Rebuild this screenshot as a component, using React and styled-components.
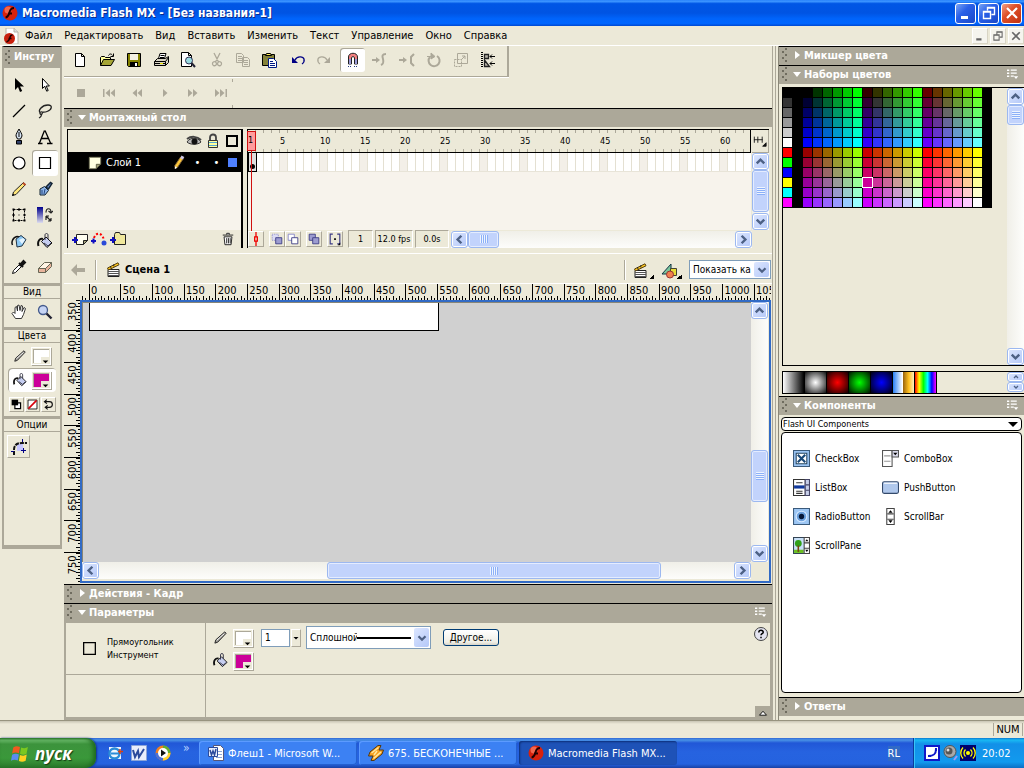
import React from 'react';
import styled, { createGlobalStyle } from 'styled-components';

const GlobalStyle = createGlobalStyle`
  * { box-sizing: border-box; }
  body {
    margin: 0;
    background: #ECE9D8;
    color: #000;
    font-family: "DejaVu Sans Condensed", "DejaVu Sans", sans-serif;
    font-size: 11px;
    line-height: 13px;
  }
  button, input, select {
    font: inherit;
    color: inherit;
    margin: 0;
    padding: 0;
    border: 0;
    background: none;
    border-radius: 0;
    outline: none;
  }
  select { appearance: none; }
  svg { display: block; flex: none; }
`;

/* ---------- icons ---------- */

const G = '#ACA899';

const icons = {
  flash: <><circle cx="8" cy="8" r="7.5" fill="#d8220d" /><circle cx="6" cy="5" r="3.5" fill="#f2664c" /><path d="M12 3C8 3 8 6 7.4 8S6 12 3.6 12.6M6 8.4h4" fill="none" stroke="#200" strokeWidth="2" /></>,
  flashDoc: <><path d="M3 0h8l4 4v12H3z" fill="#fff" stroke="#b8b4a8" /><path d="M11 0v4h4" fill="#ddd" stroke="#b8b4a8" /><circle cx="6.5" cy="10.5" r="5.5" fill="#c8200d" /><path d="M9.500 7C7 7 7 9 6.600 10.500S5.500 13.500 3.500 14M5.500 10.600h3" fill="none" stroke="#200" strokeWidth="1.500" /></>,
  newDoc: <path d="M3.500 1.500h6l3 3v10h-9zM9.500 1.500v3h3" fill="#fff" stroke="#000" />,
  open: <><path d="M1.500 13.500v-8l1-1h3l1 1h5v2" fill="#ffff9c" stroke="#000" /><path d="M1.500 13.500l3-6h11l-3.500 6z" fill="#a5a536" stroke="#000" /><path d="M9.500 3.500c1-2 3-2 4 0M14.500 1.500v3h-3" fill="none" stroke="#000" /></>,
  save: <><path d="M1.500 1.500h13v13h-12l-1-1z" fill="#848200" stroke="#000" /><path d="M4 2h8v6H4z" fill="#f4f1e4" /><path d="M4 10h8v4H4z" fill="#000" /><path d="M9 11h2v3H9z" fill="#fff" /></>,
  print: <><path d="M5.500 6.500l1.500-5h6l-1.500 5" fill="#fff" stroke="#000" /><path d="M7.500 3.500h4M7 5.500h4" stroke="#000" /><path d="M1.500 9.500l3-3h8l3-2v6l-3 3h-11z" fill="#d8d4c4" stroke="#000" /><path d="M1.500 9.500h11v4M12.500 9.500l3-4M2 11.500h10" fill="none" stroke="#000" /><path d="M7 11h3v1H7z" fill="#e8e000" /></>,
  preview: <><path d="M1.500.5h7l3 3v11h-10zM8.500.5v3h3" fill="#fff" stroke="#000" /><circle cx="9" cy="8.500" r="3.500" fill="#9adbe0" stroke="#335" /><path d="M11.500 11l3.500 4" stroke="#223" strokeWidth="2" /></>,
  cut: <path d="M5 1l4.500 9M11 1L6.500 10M6.500 10a2 2 0 1 1-3 2 2 2 0 0 1 3-2M9.500 10a2 2 0 1 0 3 2 2 2 0 0 0-3-2" fill="none" stroke={G} strokeWidth="1.300" />,
  copy: <path d="M1.500 1.500h5l2 2v7h-7zM3 4.500h4M3 6.500h4M3 8.500h4M7.500 5.500h5l2 2v7h-7zM9 8.500h4M9 10.500h4M9 12.500h4" fill="#ECE9D8" stroke={G} />,
  paste: <><path d="M1.500 2.500h12v11h-12z" fill="#84823a" stroke="#000" /><path d="M4.500 3.500l1-2h4l1 2z" fill="#ffef5a" stroke="#000" /><path d="M7.500 6.500h5l3 3v6h-8z" fill="#fff" stroke="#001a84" /><path d="M9 9.500h3M9 11.500h5M9 13.500h5" stroke="#001a84" /></>,
  undo: <><path d="M2 5v6h6z" fill="#000084" /><path d="M5 8c2-4 8-4 9-1 .5 2-.5 4-2 5" fill="none" stroke="#000084" strokeWidth="1.300" /></>,
  redo: <><path d="M14 5v6H8z" fill={G} /><path d="M11 8C9 4 3 4 2 7c-.5 2 .5 4 2 5" fill="none" stroke={G} strokeWidth="1.300" /></>,
  magnet: <><path d="M3.500 12V5c0-5 9-5 9 0v7h-3V5.500c0-1-3-1-3 0V12z" fill="#f08080" stroke="#222" /><path d="M4 7h2v5H4zM10 7h2v5h-2z" fill="#9a9ad8" /><path d="M3 14.500h4M9 14.500h4" stroke="#223a84" strokeDasharray="1 1" /></>,
  smooth: <><path d="M0 8h6" stroke={G} strokeWidth="2" /><path d="M4 5l4 3-4 3z" fill={G} /><path d="M14 2c-4 0-4 2-3 5 1 4 0 5-2 6" fill="none" stroke={G} strokeWidth="2" /></>,
  straight: <><path d="M0 8h6" stroke={G} strokeWidth="2" /><path d="M4 5l4 3-4 3z" fill={G} /><path d="M15 2l-3 3v6l3 3" fill="none" stroke={G} strokeWidth="2" /></>,
  rotate: <><path d="M4 5a5.500 5.500 0 1 0 7-1" fill="none" stroke={G} strokeWidth="2" /><path d="M1 4.500h5M5 1v6l4-2.500z" fill={G} stroke={G} /></>,
  scale: <><path d="M4.500 1.500h10v10h-10z" fill="none" stroke={G} /><path d="M1.500 7.500h7v7h-7z" fill="none" stroke={G} strokeDasharray="2 1" /><path d="M8 8l4-4M9 4h3v3" fill="none" stroke={G} /></>,
  align: <><path d="M2 0v16" stroke="#000" strokeWidth="2" strokeDasharray="1 1" /><path d="M4.500 2.500h4v4h-4zM4.500 8v6.500h5z" fill="#b8b4a8" stroke="#222" strokeWidth="1.300" /><path d="M10 4.500h5M12 2.500l-2 2 2 2M10 11.500h5M12 9.500l-2 2 2 2" fill="none" stroke="#000" /></>,
  stop: <path d="M4 4h8v8H4z" fill={G} />,
  first: <path d="M2 4h1.500v8H2zM9 4v8L4.500 8zM14 4v8L9.500 8z" fill={G} />,
  back: <path d="M8 4v8L3.500 8zM13 4v8L8.500 8z" fill={G} />,
  play: <path d="M6 4v8l4.500-4z" fill={G} />,
  fwd: <path d="M3 4v8l4.500-4zM8 4v8l4.500-4z" fill={G} />,
  last: <path d="M2 4v8l4.500-4zM7 4v8l4.500-4zM12.500 4H14v8h-1.500z" fill={G} />,
  arrow: <path d="M4 1v12l3-3 2 5 2.200-1L9 9.500h4z" fill="#000" />,
  subselect: <path d="M5.500 1.500v10l2.200-2.300 2 5 1.500-.7-2-4.500h3.200z" fill="#fff" stroke="#000" />,
  line: <path d="M2 14L14 2" stroke="#000" strokeWidth="1.300" />,
  lasso: <path d="M3.500 10C0 8 5 2 11 2c5 0 4 5-1 6.500-2 .7-5 1-5 .5s-2.500 0-2 1.500 3 .5 2-.5M4 11c1 1 0 3-2 4" fill="none" stroke="#222" strokeWidth="1.300" />,
  pen: <><path d="M8 0c-1.500 3-3 4.500-3 7l1.500 3h3L11 7c0-2.500-1.500-4-3-7z" fill="#d6e4f4" stroke="#000" /><path d="M8 3v5" stroke="#000" /><path d="M5.500 11.500h5V15h-5z" fill="#31416b" stroke="#000" /></>,
  letter: <path d="M7.500 1.500L2.500 14M8 1.500L13.500 14M4.500 9.500h7M1 14.500h4.500M10 14.500h5.500" fill="none" stroke="#000" strokeWidth="1.300" />,
  oval: <circle cx="8" cy="8" r="6" fill="#fff" stroke="#000" strokeWidth="1.200" />,
  rect: <path d="M2.500 2.500h11v11h-11z" fill="none" stroke="#000" strokeWidth="1.200" />,
  pencil: <><path d="M1.500 14.500l1-3.500L12.500 1.500l2 2L5 13.500z" fill="#ffe77b" stroke="#222" /><path d="M12 2l2.500 2" stroke="#c5502a" strokeWidth="2" /><path d="M1 15l1-2.500L3.500 14z" /></>,
  layerPencil: <><path d="M4.500 14.500l-.5-3L10 2.500l3 1.500-6 9z" fill="#ffc83a" stroke="#8a6a3a" /><path d="M10.500 2l3 1.500" stroke="#d0c8e8" strokeWidth="3" /><path d="M4 15l.5-3 2 1.500z" fill="#fff" /></>,
  brush: <><path d="M9 6l4.500-4.500 1.500 1L11.500 8z" fill="#6b8cc6" stroke="#123" strokeWidth="1.500" /><path d="M3 8l4.500-2.500 4 4L8 14H3z" fill="#8cb4e8" stroke="#123" /><path d="M5 13V9M7 13l1-5" stroke="#25457f" /></>,
  transform: <><path d="M2.500 2.500h11v11h-11z" fill="none" stroke="#000" strokeDasharray="2 1" /><path d="M1.500 1.500h2v2h-2zM12.500 1.500h2v2h-2zM1.500 12.500h2v2h-2zM12.500 12.500h2v2h-2zM7 1.500h2v2H7zM7 12.500h2v2H7zM1.500 7h2v2h-2zM12.500 7h2v2h-2zM7.500 7.500h1v1h-1z" /></>,
  fillTransform: <><path d="M0 0h6v16H0z" fill="url(#fadeBlue)" /><path d="M9 5.500c0-5 5-5 5 0M11.500 4l2.500 2 2-2M9 9v4M9 9l5 5M9 9h3M14 14v-3M14 14h-3" fill="none" stroke="#222" strokeWidth="1.200" /></>,
  ink: <><path d="M1.500 12C0 9 2 4 6 3.500c2 0 4 .5 5 1.500" fill="none" stroke="#111" strokeWidth="1.500" /><path d="M5 6l5-3.500 5 4L11 13l-5 1z" fill="#8cc8f4" stroke="#234" /><path d="M8 7l4-2 2 2-3 4z" fill="#e4f4ff" /></>,
  bucket: <><path d="M1.500 13C0 8 3 5 6 6" fill="none" stroke="#111" strokeWidth="2" /><path d="M4.500 8.500L9 4l6 6-5 4.500z" fill="#c6cef0" stroke="#111" /><path d="M8 7V2c0-2 3-2 3 0v4M7 10l4 3 3-3" fill="none" stroke="#334" /></>,
  dropper: <><path d="M1.500 14.500l1-3 6-6 2 2-6 6z" fill="#fff" stroke="#111" /><path d="M8 4l4 4M9 6l3.500-4 1.500 1.500L10.500 7z" stroke="#111" strokeWidth="2" /></>,
  eraser: <><path d="M1.500 9.500l6-6h7l-6 6z" fill="#fff4e4" stroke="#665" /><path d="M1.500 9.500h7v4h-7zM8.500 9.500l6-6v4l-6 6z" fill="#e8b49c" stroke="#665" /></>,
  hand: <path d="M4.500 14.500L1 9.500 2.500 8 4 9.500V3.500l1.500-1L6.500 7V1.500L8 1l1 5.500 1-5 1.500.5-.5 5.500 2-4 1.500 1-2 6-2 4z" fill="#fff" stroke="#222" strokeWidth=".9" />,
  zoom: <><circle cx="6" cy="6" r="4.500" fill="#c6d4f4" stroke="#445a8c" strokeWidth="1.300" /><path d="M9.500 9.500l5 5" stroke="#223" strokeWidth="2.400" /></>,
  grayPencil: <><path d="M2 14l1-3.500L12.500 2 14 3.500 5 13z" fill="#9c9a94" stroke="#222" /><path d="M4 11l8-7" stroke="#fff" /></>,
  corner: <><path d="M6 5h6v7H6z" fill="#c6c6ff" /><path d="M3 16v-5c0-5 3-7 8-7h5" fill="none" stroke="#111" strokeWidth="2" strokeDasharray="4 1" /><path d="M11.500 0v3M0 12.500h3M10 11.500h5M12.500 9v5" stroke="#000084" /></>,
  swapBw: <><path d="M6 6h7v7H6z" fill="#fff" stroke="#000" strokeWidth="1.500" /><path d="M2 2h8v7H2z" fill="#000" /></>,
  noColor: <><path d="M2.500 2.500h11v11h-11z" fill="#fff" stroke="#000" /><path d="M3 13L13 3" stroke="#d8000c" strokeWidth="2" /></>,
  swap: <path d="M3 4.500h6c5 0 5 7 0 7H4M6 2L3 4.500 6 7M7 9l-3 2.500L7 14" fill="none" stroke="#111" strokeWidth="1.400" />,
  eye: <><path d="M1 9c3-5 11-5 14 0-3 3-11 3-14 0z" fill="#bbb" stroke="#333" /><circle cx="8.500" cy="8.500" r="3" fill="#111" /><path d="M1 6c4-3 10-3 14 1" fill="none" stroke="#444" strokeWidth="2" /></>,
  lock: <><path d="M5 8V4.500c0-4 6-4 6 0V8" fill="none" stroke="#444" strokeWidth="1.800" /><path d="M3.500 7.500h9v7h-9z" fill="#ffff9c" stroke="#333" /><path d="M4 9.500h8M4 12.500h8" stroke="#52a5d8" /></>,
  outline: <path d="M3 3h10v10H3z" fill="none" stroke="#000" strokeWidth="2" />,
  page: <><path d="M1.500 1.500h13v8l-5 5h-8z" fill="#ffffe0" stroke="#77775a" /><path d="M9.500 14.500v-5h5z" fill="#a5a57b" stroke="#55553a" /></>,
  addLayer: <><path d="M4.500 3.500h11v6l-4 4h-7z" fill="#fffff0" stroke="#222" /><path d="M11.500 13.500v-4h4z" fill="#a5a57b" stroke="#222" /><path d="M0 9h6M3 6v6" stroke="#1010c0" strokeWidth="2" /></>,
  addGuide: <><path d="M3 7c2-6 8-6 10 2" fill="none" stroke="#f00" strokeWidth="2" strokeDasharray="2 2" /><path d="M0 10h5M2.500 7.500v5" stroke="#1010c0" strokeWidth="2" /><circle cx="13" cy="12" r="2.500" fill="#2a4ad8" /></>,
  addFolder: <><path d="M4.500 13.500v-10l1-2h4l1 2h5v10z" fill="#f0e89c" stroke="#222" /><path d="M0 9h6M3 6v6" stroke="#1010c0" strokeWidth="2" /></>,
  trash: <path d="M3.500 5.500l1 9h7l1-9zM2 3.500h12M6.500 3V1.500h3V3M6.500 7v6M8.500 7v6M10.500 7v6" fill="#fff" stroke="#111" />,
  playhead: <path d="M8 0v5M8 11v5M6.500 5.500h3v5h-3z" fill="none" stroke="#e00" strokeWidth="1.500" />,
  onion: <><path d="M2.500 2.500h7v7h-7z" fill="#dcdcf4" stroke="#8484c6" strokeDasharray="1 1" /><path d="M6.500 6.500h7v7h-7z" fill="#9c9cd0" stroke="#3a3a84" /></>,
  onionOut: <><path d="M2.500 2.500h7v7h-7z" fill="#fff" stroke="#8484c6" /><path d="M6.500 6.500h7v7h-7z" fill="#fff" stroke="#3a3a84" /></>,
  onionEdit: <><path d="M2.500 2.500h7v7h-7z" fill="#9c9cd0" stroke="#3a3a84" /><path d="M6.500 6.500h7v7h-7z" fill="#9c9cd0" stroke="#3a3a84" /></>,
  marker: <><path d="M5.500 2.500h-3v11h3M10.500 2.500h3v11h-3" fill="none" stroke="#3a3a84" strokeWidth="1.300" /><path d="M7 7h2v2H7zM14 15v-3l-3 3z" /></>,
  frameView: <path d="M1.500 3v7M5.500 3v7M10.500 3v7M1 6.500h10M11 14h4v-4z" stroke="#111" fill="#111" />,
  leftArrow: <path d="M1 8l6-6v4h8v4H7v4z" fill={G} />,
  clapper: <><path d="M2 7.500h11v7H2z" fill="#fff" stroke="#222" /><path d="M2 9.500h11M2 11.500h11M2 13.500h11" stroke="#555" /><path d="M1.500 6L12 .8l1 2L2.500 8z" fill="#ffc820" stroke="#554010" /><path d="M5 6l-.5-2M8 4.500L7.500 2.500" stroke="#222" /></>,
  shapes: <><path d="M1 11L10 1v10z" fill="#7bc69c" stroke="#134" /><path d="M9.500 5.500h6v7h-6z" fill="#e8dc3a" stroke="#443" /><circle cx="9" cy="11.500" r="3.500" fill="#f08050" stroke="#933" /></>,
  menu: <path d="M0 2h3v2H0zM0 6h3v2H0zM0 10h3v2H0zM5 2h8v1.500H5zM5 6h8v1.500H5zM5 10h4v1.500H5zM9 11h6l-3 3.500z" fill="#fff" />,
  checkBox: <><path d="M.5.5h15v15H.5z" fill="#9cc6f4" stroke="#3a5a7b" /><path d="M3 3h10v10H3z" fill="#fff" stroke="#25455f" /><path d="M4.500 4.500l7 7M11.500 4.500l-7 7" stroke="#184878" strokeWidth="2" /></>,
  comboBox: <><path d="M.5.5h9v15h-9z" fill="#fff" stroke="#555" /><path d="M2 5.500h6M2 10.500h6" stroke="#999" /><path d="M9.500.5h6v6h-6z" fill="#dde" stroke="#555" /><path d="M10.500 2.500h4l-2 2.500z" /></>,
  listBox: <><path d="M.5.5h11v15H.5z" fill="#fff" stroke="#333" /><path d="M1 6h10v3H1z" fill="#10389c" /><path d="M3 3.500h6M3 11.500h6M3 13.500h6" stroke="#333" /><path d="M11.500.5h4v15h-4z" fill="#c6cee8" stroke="#446" /><path d="M12 5.500h3M12 10.500h3" stroke="#446" /></>,
  pushButton: <><rect x=".5" y="2.500" width="15" height="11" rx="1.500" fill="#b0c8ec" stroke="#344a6b" /><path d="M2 4h12" stroke="#fff" /></>,
  radio: <><path d="M.5.5h15v15H.5z" fill="#9cc6f4" stroke="#3a5a7b" /><circle cx="8" cy="8" r="5" fill="#6ba0dc" stroke="#d8eaff" /><circle cx="8" cy="8" r="2.500" fill="#061838" /></>,
  scrollBar: <><path d="M4.500.5h7v15h-7z" fill="#fff" stroke="#444" /><path d="M5 5.500h6M5 10.500h6" stroke="#444" /><path d="M8 2L6 4.500h4zM8 14l-2-2.500h4z" /></>,
  scrollPane: <><path d="M.5.5h15v15H.5z" fill="#c8e0f8" stroke="#345" /><path d="M1 12h9v3H1z" fill="#6bc020" /><circle cx="5" cy="6" r="3.200" fill="#30a018" /><path d="M5 8v6" stroke="#7a4310" strokeWidth="1.500" /><path d="M10.500.5h5v15h-5zM10.500 5.500h5M10.500 10.500h5" fill="#fff" stroke="#444" /><path d="M13 2l-1.500 2h3zM13 14l-1.500-2h3z" /></>,
  help: <><circle cx="8" cy="8" r="6.500" fill="#e4e4f0" stroke="#444" /><path d="M5.800 6.500C5.800 3.500 10.400 3.700 10.200 6.300 10 7.700 8 7.700 8 9.300M8 10.700v1.500" fill="none" stroke="#000" strokeWidth="1.500" /></>,
  up: <path d="M4 10.500h8L8 6z" fill="#fff" stroke="#000" />,
  winFlag: <><path d="M2 3c2-1.400 4-1.400 6-.3L7 8.300C5 7.300 3 7.300 1 8.500z" fill="#f05a20" /><path d="M9 3c2 1 4 1 6-.3l-1.200 6C12 9.700 10 9.700 8 8.700z" fill="#7bc820" /><path d="M1 9.500c2-1.200 4-1.200 6-.2l-1 5.400c-2-1-4-1-6 .2z" fill="#5a8cf0" /><path d="M8 9.700c2 1 4 1 6-.3l-1 5.400c-2 1.200-4 1.200-6 .2z" fill="#ffd020" /></>,
  ie: <><path d="M2 2h12v12H2z" fill="#eef6ff" /><circle cx="7.500" cy="8.500" r="5" fill="none" stroke="#2a8cd8" strokeWidth="2.400" /><path d="M4 8.500h8" stroke="#2a8cd8" strokeWidth="2" /><path d="M13 4v5M11 6.500h5" stroke="#d84010" strokeWidth="1.500" /></>,
  word: <><path d="M.5.5h15v15H.5z" fill="#e8eefc" stroke="#8ca5d8" /><path d="M2 5l2 7 3-6 1 6 5-8" fill="none" stroke="#2a4a9c" strokeWidth="2" /></>,
  media: <><circle cx="8" cy="8" r="7.500" fill="#f08020" /><path d="M8 .5A7.500 7.500 0 0 1 15.500 8H8z" fill="#60b030" /><path d="M8 8h7.500A7.500 7.500 0 0 1 8 15.500z" fill="#ffd030" /><path d="M.5 8A7.500 7.500 0 0 0 8 15.500V8z" fill="#4a70d8" /><circle cx="8" cy="8" r="5" fill="#fff" /><path d="M6 4.500v7l5-3.500z" fill="#111" /></>,
  wordDoc: <><path d="M5.500.5h7l3 3v12h-10z" fill="#fff" stroke="#557" /><path d="M8 6.500h6M8 9.500h6M8 12.500h6" stroke="#8ca5d8" /><path d="M.5 2.500h9v9h-9z" fill="#e8eefc" stroke="#2a4a9c" /><path d="M2 5l1.500 5L5 6l1.500 4L8 4" fill="none" stroke="#2a4a9c" strokeWidth="1.500" /></>,
  winamp: <><path d="M10 .5h3L11 5h4.500L14 9 6 15.500H3L5 11H.5L2 7z" fill="#f8a020" stroke="#553a10" /><path d="M10.500 2.500L3.500 8M13 7l-7.500 6.500M9 6l-3 4" fill="none" stroke="#ffe8a0" strokeWidth="1.500" /></>,
  phone: <><path d="M0 0h16v16H0z" fill="#1018c8" /><path d="M2 2h12v12H2z" fill="#fff" /><path d="M12 4c0 5-2 7-8 7" fill="none" stroke="#1018c8" strokeWidth="2" /><path d="M11 3h2v3h-2zM4 10h3v2H4z" fill="#1018c8" /></>,
  speaker: <><circle cx="8" cy="6.500" r="6" fill="#a8a8a8" stroke="#555" /><circle cx="7" cy="6" r="3.500" fill="#555" /><circle cx="6" cy="5" r="1.500" fill="#ddd" /><path d="M12 15l3-4" stroke="#9c9cf4" strokeWidth="2" /></>,
  radioWave: <><path d="M0 0h16v16H0z" fill="#00006b" /><circle cx="8" cy="8" r="2" fill="#ff0" /><path d="M5.500 4.500c-2 2-2 5 0 7M10.500 4.500c2 2 2 5 0 7M3 2.500c-3 3-3 8 0 11M13 2.500c3 3 3 8 0 11" fill="none" stroke="#ff0" strokeWidth="1.300" /></>,
  minimize: <path d="M3 11h7v3H3z" fill="currentColor" />,
  restore: <path d="M6.500 5.500v-3h7v7h-3M6 3h8M2.500 6.500h7v7h-7zM2 7h8" fill="none" stroke="currentColor" strokeWidth="1.400" />,
  close: <path d="M3 3l10 10M13 3L3 13" stroke="currentColor" strokeWidth="2.200" />,
  chevUp: <path d="M4 10l4-4 4 4" fill="none" stroke="#4D6185" strokeWidth="2.600" />,
  chevDown: <path d="M4 6l4 4 4-4" fill="none" stroke="#4D6185" strokeWidth="2.600" />,
  chevLeft: <path d="M10 4L6 8l4 4" fill="none" stroke="#4D6185" strokeWidth="2.600" />,
  chevRight: <path d="M6 4l4 4-4 4" fill="none" stroke="#4D6185" strokeWidth="2.600" />,
  tri: <path d="M3 6h10l-5 5z" />,
};

const Icon = ({ name, size = 16 }) => (
  <svg width={size} height={size} viewBox="0 0 16 16" aria-hidden="true">{icons[name]}</svg>
);

/* ---------- window ---------- */

const Page = styled.div`
  display: flex;
  flex-direction: column;
  min-height: 100vh;
`;
const TitleBar = styled.header`
  height: 26px;
  display: flex;
  align-items: center;
  gap: 4px;
  padding: 0 2px;
  color: #fff;
  font-size: 12px;
  font-weight: bold;
  text-shadow: 1px 1px #0a2a8c;
  background: linear-gradient(#2a84fb 0%, #3a93ff 6%, #0056e5 14%, #0054e3 50%, #0064fb 72%, #0066ff 90%, #0048d0 100%);
`;
const Grow = styled.span`
  flex: 1;
  min-width: 0;
`;
const WinButton = styled.button`
  width: 21px;
  height: 21px;
  display: grid;
  place-items: center;
  color: #fff;
  border: 1px solid #fff;
  border-radius: 3px;
  background: ${props => props.$close
    ? 'linear-gradient(135deg, #f0a088, #e05028 40%, #c03010)'
    : 'linear-gradient(135deg, #7aa4f4, #2a60e8 40%, #1a48c8)'};
`;
const WinButtons = styled.div`
  display: flex;
  gap: 2px;
`;
const MenuBar = styled.nav`
  height: 20px;
  display: flex;
  align-items: center;
  padding-left: 3px;
  border-bottom: 1px solid #fff;
`;
const MenuItem = styled.button`
  padding: 0 6px;
  height: 18px;
  white-space: nowrap;
`;
const MenuItems = styled.div`
  display: flex;
  flex: 1;
`;
const DocButton = styled.button`
  width: 16px;
  height: 16px;
  display: grid;
  place-items: center;
  color: #666;
  background: #f5f4ee;
  border: 1px solid #fff;
  border-color: #fff #d8d4c4 #d8d4c4 #fff;
`;
const Workspace = styled.div`
  flex: 1;
  display: flex;
  align-items: flex-start;
  border-bottom: 1px solid #97947f;
`;

/* ---------- tools ---------- */

const ToolsPanel = styled.aside`
  width: 60px;
  margin: 0 2px;
  flex: none;
  border: solid #ACA899;
  border-width: 0 2px 4px;
  border-top: 1px solid #000;
`;
const ToolsTitle = styled.h2`
  display: flex;
  gap: 3px;
  align-items: center;
  margin: 0;
  padding-bottom: 2px;
  height: 21px;
  white-space: nowrap;
  background: #ACA899;
  color: #fff;
  font-size: 11px;
`;
const ToolGrid = styled.div`
  display: grid;
  grid-template-columns: 26px 26px;
  justify-content: center;
  padding: ${props => props.$pad};
  border-bottom: 3px solid #ACA899;
`;
const ToolButton = styled.button`
  height: 26px;
  display: grid;
  place-items: center;
  border-radius: 3px;
  background: ${props => props.$on ? '#fff' : 'none'};
  box-shadow: ${props => props.$on ? 'inset 1px 1px #ACA899' : 'none'};
`;
const SectionLabel = styled.h3`
  margin: 0;
  height: 13px;
  font-size: 10px;
  line-height: 11px;
  font-weight: normal;
  text-align: center;
  border-bottom: 1px solid #ACA899;
`;
const ColorsBox = styled.div`
  height: 76px;
  padding: 1px 4px 0;
  border-bottom: 3px solid #ACA899;
`;
const ColorRow = styled.div`
  height: 24px;
  display: flex;
  align-items: center;
  gap: 4px;
  padding-left: 5px;
  border-radius: 4px;
  background: ${props => props.$on ? '#fff' : 'none'};
  box-shadow: ${props => props.$on ? 'inset 1px 1px #ACA899' : 'none'};
`;
const SwatchButton = styled.button`
  width: 20px;
  height: 18px;
  display: flex;
  align-items: flex-end;
  justify-content: flex-end;
  border: 2px solid #ECE9D8;
  outline: 1px solid #fff;
  outline-offset: -1px;
  box-shadow: 1px 1px #ACA899, inset 1px 1px #ACA899;
  background: ${props => props.$color};
`;
const Corner = styled.span`
  width: 8px;
  height: 6px;
  display: grid;
  place-items: center;
  background: #ECE9D8;
`;
const MiniRow = styled.div`
  display: flex;
  height: 24px;
  align-items: center;
  justify-content: center;
  gap: 1px;
`;
const BoxButton = styled.button`
  width: ${props => props.$w || 15}px;
  height: ${props => props.$w || 15}px;
  display: grid;
  place-items: center;
  border: 1px solid #fff;
  border-color: #fff #ACA899 #ACA899 #fff;
`;
const Options = styled.div`
  height: 113px;
  padding: 3px;
`;

/* ---------- centre ---------- */

const Centre = styled.main`
  flex: 1;
  min-width: 0;
  align-self: stretch;
  display: flex;
  flex-direction: column;
`;
const ToolBar = styled.div`
  align-self: flex-start;
  height: 31px;
  display: flex;
  align-items: center;
  gap: 4px;
  padding: 0 7px 2px 3px;
  border: solid #ACA899;
  border-width: 0 2px 1px 0;
  box-shadow: 0 1px #fff;
`;
const ToolGroup = styled.div`
  display: flex;
  gap: ${props => props.$gap}px;
`;
const BarButton = styled.button`
  width: 25px;
  height: 24px;
  display: grid;
  place-items: center;
  border-radius: 3px;
  background: ${props => props.$on ? '#fff' : 'none'};
  box-shadow: ${props => props.$on ? 'inset 1px 1px #ACA899' : 'none'};
`;
const Controller = styled.div`
  align-self: flex-start;
  height: 31px;
  display: flex;
  align-items: center;
  gap: 3px;
  padding-left: 4px;
  background:
    linear-gradient(#ACA899, #ACA899) 100% 2px / 1px 3px no-repeat,
    linear-gradient(#ACA899, #ACA899) 100% 100% / 1px 3px no-repeat;
`;
const PanelTitle = styled.h2`
  margin: 0;
  height: 19px;
  flex: none;
  display: flex;
  align-items: center;
  gap: 3px;
  padding: 0 5px 2px 2px;
  border-top: 1px solid #000;
  background: #ACA899;
  color: #fff;
  font-size: 11px;
  font-weight: bold;
`;
const Grip = styled.span`
  width: 7px;
  height: 14px;
  flex: none;
  background:
    linear-gradient(#6f6c5f, #6f6c5f) 4px 0 / 2px 2px no-repeat,
    linear-gradient(#6f6c5f, #6f6c5f) 1px 3px / 2px 2px no-repeat,
    linear-gradient(#6f6c5f, #6f6c5f) 4px 6px / 2px 2px no-repeat,
    linear-gradient(#6f6c5f, #6f6c5f) 1px 9px / 2px 2px no-repeat,
    linear-gradient(#6f6c5f, #6f6c5f) 4px 12px / 2px 2px no-repeat;
`;
const Disclosure = styled.span`
  width: 0;
  height: 0;
  margin: ${props => props.$open ? '0 0 0 2px' : '0 1px 0 4px'};
  border: solid transparent;
  border-width: ${props => props.$open ? '5px 4px 0' : '4px 0 4px 5px'};
  border-top-color: ${props => props.$open ? '#fff' : 'transparent'};
  border-left-color: ${props => props.$open ? 'transparent' : '#fff'};
`;
const Timeline = styled.section`
  display: flex;
  height: 127px;
  flex: none;
  padding: 2px 3px 5px;
  border-bottom: 1px solid #fff;
`;
const Layers = styled.div`
  width: 176px;
  flex: none;
  display: flex;
  flex-direction: column;
  border: solid #000;
  border-width: 1px 2px 0 1px;
`;
const LayerHead = styled.div`
  height: 23px;
  display: flex;
  align-items: center;
  justify-content: flex-end;
  gap: 3px;
  padding-right: 1px;
  border-bottom: 1px solid #000;
`;
const LayerRow = styled.div`
  height: 19px;
  display: flex;
  align-items: center;
  padding: 0 4px 0 20px;
  gap: 4px;
  background: #000;
  color: #fff;
`;
const LayerMark = styled.span`
  width: 15px;
  text-align: center;
`;
const LayerColor = styled.span`
  width: 9px;
  height: 9px;
  background: #4f80ff;
`;
const Blank = styled.div`
  flex: 1;
  background: #F7F3EC;
`;
const LayerFoot = styled.div`
  height: 18px;
  display: flex;
  align-items: center;
  gap: 3px;
  padding: 0 6px 0 4px;
`;
const Frames = styled.div`
  position: relative;
  flex: 1;
  min-width: 0;
  margin-left: 4px;
  display: flex;
  flex-direction: column;
  border: solid #000;
  border-width: 1px 0 0 1px;
`;
const FrameRuler = styled.div`
  height: 23px;
  display: flex;
  overflow: hidden;
  padding: 5px 0 0 32px;
  font-size: 9px;
  border-right: 1px solid #000;
  border-bottom: 1px solid #000;
  background:
    repeating-linear-gradient(90deg, transparent 0 7px, #ACA899 7px 8px) 0 0 / 100% 3px no-repeat,
    repeating-linear-gradient(90deg, transparent 0 7px, #ACA899 7px 8px) 0 100% / 100% 3px no-repeat;
`;
const FrameNumber = styled.span`
  width: 40px;
  flex: none;
`;
const FrameTrack = styled.div`
  height: 19px;
  border-bottom: 1px solid #e8e4d8;
  background:
    repeating-linear-gradient(90deg, transparent 0 7px, #E4E0D2 7px 8px),
    repeating-linear-gradient(90deg, #fff 0 32px, #F3EFE8 32px 40px);
`;
const Playhead = styled.div`
  position: absolute;
  top: 1px;
  left: -1px;
  width: 9px;
  height: 20px;
  font-size: 9px;
  line-height: 17px;
  background: #ff9c9c;
  border: 1px solid #d01010;
`;
const PlayLine = styled.div`
  position: absolute;
  top: 21px;
  left: 3px;
  height: 80px;
  border-left: 1px solid #d01010;
`;
const KeyFrame = styled.div`
  width: 9px;
  height: 19px;
  display: flex;
  align-items: flex-end;
  justify-content: center;
  padding-bottom: 2px;
  border: 1px solid #000;
  border-top: 0;
  background: #ddd;
`;
const Dot = styled.span`
  width: 5px;
  height: 5px;
  border-radius: 50%;
  background: #000;
`;
const FrameBody = styled.div`
  display: flex;
  flex: 1;
  min-height: 0;
`;
const FrameArea = styled.div`
  flex: 1;
  min-width: 0;
  display: flex;
  flex-direction: column;
`;
const SideColumn = styled.div`
  width: 18px;
  display: flex;
  flex-direction: column;
  padding-left: 1px;
`;
const ViewButton = styled.button`
  height: 23px;
  display: grid;
  place-items: center;
  border-right: 1px solid #ACA899;
  border-bottom: 1px solid #ACA899;
`;
const FrameFoot = styled.div`
  height: 18px;
  display: flex;
  align-items: center;
  margin-right: 17px;
`;
const FootGroup = styled.div`
  display: flex;
  margin-right: 5px;
`;
const Field = styled.output`
  width: ${props => props.$w}px;
  height: 18px;
  margin-right: 2px;
  flex: none;
  font-size: 9px;
  line-height: 17px;
  text-align: center;
  white-space: nowrap;
  border: 1px solid #fff;
  border-color: #ACA899 #fff #fff #ACA899;
`;

/* ---------- scroll bars ---------- */

const ScrollTrack = styled.div`
  display: flex;
  flex: ${props => props.$fill ? 1 : 'none'};
  flex-direction: ${props => props.$vertical ? 'column' : 'row'};
  ${props => props.$vertical ? 'width: 17px;' : 'height: 17px;'}
  min-width: 0;
  background: ${props => props.$vertical ? 'linear-gradient(90deg, #f0efe8, #fdfdfb)' : 'linear-gradient(#f0efe8, #fdfdfb)'};
`;
const ScrollButton = styled.button`
  width: 17px;
  height: ${props => props.$h || 17}px;
  flex: none;
  display: grid;
  place-items: center;
  overflow: hidden;
  border: 1px solid #9cb8f0;
  border-radius: 3px;
  box-shadow: inset 0 0 0 1px #fff;
  background: linear-gradient(135deg, #dce6ff, #b4c8f8);
`;
const ScrollSpace = styled.span`
  flex: ${props => props.$n} 1 0;
`;
const ScrollThumb = styled.span`
  flex: ${props => props.$n} 1 0;
  display: grid;
  place-items: center;
  border: 1px solid #9cb8f0;
  border-radius: 3px;
  box-shadow: inset 0 0 0 1px #e4ecff;
  background: #c2d3fc;
`;
const ThumbGrip = styled.span`
  width: 8px;
  height: 8px;
  background: repeating-linear-gradient(${props => props.$vertical ? '180deg' : '90deg'}, #eef4fe 0 1px, #8cb0f8 1px 2px);
`;

const ScrollBar = ({ vertical, fill, parts }) => (
  <ScrollTrack $vertical={vertical} $fill={fill}>
    <ScrollButton type="button" aria-label={vertical ? 'Вверх' : 'Влево'}><Icon name={vertical ? 'chevUp' : 'chevLeft'} size={15} /></ScrollButton>
    <ScrollSpace $n={parts[0]} />
    <ScrollThumb $n={parts[1]}><ThumbGrip $vertical={vertical} /></ScrollThumb>
    <ScrollSpace $n={parts[2]} />
    <ScrollButton type="button" aria-label={vertical ? 'Вниз' : 'Вправо'}><Icon name={vertical ? 'chevDown' : 'chevRight'} size={15} /></ScrollButton>
  </ScrollTrack>
);

/* ---------- edit bar and stage ---------- */

const EditBar = styled.div`
  height: 29px;
  flex: none;
  display: flex;
  align-items: center;
  gap: 9px;
  padding: 2px 1px 0 6px;
`;
const Divider = styled.span`
  width: 2px;
  height: 20px;
  background: #ACA899;
  border-right: 1px solid #fff;
`;
const SceneName = styled.span`
  display: flex;
  align-items: center;
  gap: 3px;
  font-weight: bold;
`;
const EditTools = styled.div`
  display: flex;
  align-items: center;
  gap: 7px;
`;
const DropButton = styled.button`
  display: flex;
  align-items: flex-end;
  height: 18px;
  width: 21px;
`;
const Notch = styled.span`
  width: 5px;
  height: 5px;
  flex: none;
  background: linear-gradient(135deg, transparent 50%, #000 50%);
`;
const Combo = styled.span`
  display: flex;
  align-items: center;
  width: ${props => props.$w}px;
  height: ${props => props.$h}px;
  padding: 1px;
  border: 1px solid #7F9DB9;
  background: #fff;
  select {
    flex: 1;
    min-width: 0;
    height: 100%;
    padding-left: 2px;
    font-size: 10px;
  }
`;
const ComboArrow = styled.span`
  width: 15px;
  align-self: stretch;
  display: grid;
  place-items: center;
  border-radius: 2px;
  background: linear-gradient(135deg, #dce6ff, #b4c8f8);
`;
const Editor = styled.section`
  flex: none;
  display: grid;
  grid-template-columns: 16px 1fr;
  grid-template-rows: 16px 283px;
  background: #ECE9D8;
  padding: 0 1px 1px 0;
  border-top: 1px solid #fff;
`;
const RulerBox = styled.div`
  overflow: hidden;
  svg text { font-size: 11px; }
`;
const StageFrame = styled.div`
  border: 2px solid #316AC5;
  display: grid;
  grid-template-columns: 1fr 17px;
  grid-template-rows: 1fr 17px;
  padding: 0 1px 2px 0;
  overflow: hidden;
`;
const Pasteboard = styled.div`
  background: #D0D0D0;
  padding-left: 6px;
  border: solid #888576;
  border-width: 1px 0 0 1px;
`;
const Canvas = styled.div`
  width: 350px;
  height: 28px;
  background: #fff;
  border: 1px solid #000;
  border-top: 0;
`;

const ticks = (from, count, step) =>
  Array.from({ length: count }, (_, i) => ({ at: from + i * step, i }));

const HorizontalRuler = () => (
  <svg width="100%" height="16" shapeRendering="crispEdges">
    {ticks(9 - 3.167 * 2, 230, 3.167).map(t => (
      <path key={t.i} d={`M${t.at} 16v-${t.i % 2 ? 2 : 4}`} stroke="#000" />
    ))}
    {ticks(9, 22, 31.67).map(t => (
      <g key={t.i}>
        <path d={`M${t.at} 0v16`} stroke="#000" />
        <text x={t.at + 2} y="10">{t.i * 50}</text>
      </g>
    ))}
  </svg>
);

const VerticalRuler = () => (
  <svg width="16" height="284" shapeRendering="crispEdges">
    {ticks(0, 90, 3.167).map(t => (
      <path key={t.i} d={`M16 ${t.at}h-${t.i % 2 ? 2 : 4}`} stroke="#000" />
    ))}
    {ticks(-1, 9, 31.67).map(t => (
      <g key={t.i}>
        <path d={`M0 ${t.at}h16`} stroke="#000" />
        <text transform={`translate(12 ${t.at + 22}) rotate(-90)`}>{350 + t.i * 50}</text>
      </g>
    ))}
  </svg>
);

/* ---------- properties ---------- */

const Properties = styled.section`
  flex: 1;
  display: grid;
  grid-template-columns: 140px 1fr;
  grid-template-rows: 52px 1fr;
  border: solid #ACA899;
  border-width: 1px 2px 3px 2px;
  font-size: 9px;
`;
const PropCell = styled.div`
  display: flex;
  gap: ${props => props.$gap || 0}px;
  align-items: ${props => props.$align || 'center'};
  padding: ${props => props.$pad || 0};
  border: 0 solid #ACA899;
  border-right-width: ${props => props.$line ? 1 : 0}px;
  border-bottom-width: ${props => props.$bottom ? 1 : 0}px;
`;
const PropStack = styled.div`
  display: flex;
  flex-direction: column;
`;
const PropRow = styled.div`
  height: 23px;
  display: flex;
  align-items: center;
  gap: 5px;
`;
const Spin = styled.span`
  display: flex;
  gap: 1px;
  margin-left: 3px;
  input {
    width: 29px;
    height: 18px;
    padding-left: 3px;
    font-size: 10px;
    border: 1px solid #7F9DB9;
    background: #fff;
  }
  button {
    width: 10px;
    height: 18px;
    display: grid;
    place-items: center;
    border: 1px solid #fff;
    border-color: #fff #ACA899 #ACA899 #fff;
  }
`;
const StrokeLine = styled.span`
  width: 54px;
  height: 2px;
  margin-right: 3px;
  background: #000;
`;
const PushButton = styled.button`
  width: 56px;
  height: 17px;
  margin-left: 7px;
  font-size: 10px;
  border: 1px solid #003C74;
  border-radius: 3px;
  background: linear-gradient(#fff, #f0efe6 80%, #d8d4c8);
`;
const Collapse = styled.button`
  width: 15px;
  height: 11px;
  display: grid;
  place-items: center;
  background: #ACA899;
`;

/* ---------- right dock ---------- */

const Dock = styled.aside`
  width: 252px;
  flex: none;
  align-self: stretch;
  display: flex;
  flex-direction: column;
  padding: 0 0 4px 3px;
  border-left: 4px double #ACA899;
  box-shadow: inset 2px 0 #ECE9D8, inset 3px 0 #8a8778;
`;
const SwatchPanel = styled.div`
  height: 279px;
  margin: 3px 0 5px 3px;
  flex: none;
  display: flex;
  justify-content: space-between;
  border: solid #000;
  border-width: 1px 0 1px 1px;
`;
const SwatchGrid = styled.div`
  align-self: flex-start;
  display: grid;
  grid-template-columns: 9px 9px repeat(18, 9px);
  grid-auto-rows: 9px;
  gap: 1px;
  padding: 0 10px 1px 0;
  background: #000;
`;
const Swatch = styled.button`
  background: ${props => props.$color};
  outline: ${props => props.$on ? '1px solid #fff' : 'none'};
`;
const GradientPanel = styled.div`
  height: 23px;
  margin: 0 0 2px 3px;
  flex: none;
  display: flex;
  border: solid #000;
  border-width: 1px 0 1px 1px;
`;
const GradientSwatch = styled.button`
  width: 22px;
  border-right: 1px solid #000;
  background: ${props => props.$fill};
`;
const StepButtons = styled.div`
  margin-left: auto;
  display: flex;
  flex-direction: column;
`;
const LibrarySelect = styled.label`
  height: 14px;
  flex: none;
  margin: 2px;
  margin-bottom: 1px;
  display: flex;
  align-items: center;
  border: 1px solid #000;
  border-radius: 4px;
  background: #fff;
  select {
    flex: 1;
    padding-left: 1px;
    font-size: 9px;
    line-height: 12px;
  }
`;
const ComponentList = styled.ul`
  flex: 1;
  margin: 0 2px 4px;
  padding: 11px;
  list-style: none;
  display: grid;
  grid-template-columns: 89px 1fr;
  grid-auto-rows: 29px;
  border: 1px solid #000;
  border-radius: 4px;
  background: #fff;
  font-size: 10px;
`;
const ComponentItem = styled.li`
  display: flex;
  align-items: center;
  gap: 5px;
`;

/* ---------- bottom bars ---------- */

const StatusBar = styled.footer`
  height: 17px;
  display: flex;
  justify-content: flex-end;
  padding: 2px 1px;
  background: linear-gradient(#c8c5b4, #ECE9D8 3px);
`;
const StatusCell = styled.span`
  width: 30px;
  text-align: center;
  border: solid #ACA899;
  border-width: 0 1px;
`;
const TaskBar = styled.div`
  height: 30px;
  display: flex;
  align-items: center;
  color: #fff;
  background: linear-gradient(#3168d5 0, #4993e6 2px, #2157d7 5px, #2663e0 14px, #2562df 26px, #1941a5 30px);
`;
const StartButton = styled.button`
  width: 96px;
  height: 30px;
  display: flex;
  align-items: center;
  gap: 6px;
  padding-left: 11px;
  color: #fff;
  font: italic bold 17px "Open Sans", sans-serif;
  text-shadow: 1px 1px 1px #143a14;
  border-radius: 0 10px 10px 0;
  box-shadow: inset -3px 0 4px #1f6a1f, 1px 0 2px #10308c;
  background: linear-gradient(#2f7d2f 0, #6cbc6c 2px, #3c933c 6px, #3a983a 20px, #2c7a2c 30px);
`;
const QuickLaunch = styled.div`
  display: flex;
  align-items: center;
  gap: 8px;
  width: 103px;
  padding-left: 11px;
`;
const QuickButton = styled.button`
  height: 20px;
  display: grid;
  place-items: center;
`;
const More = styled.button`
  align-self: flex-start;
  margin-left: 4px;
  line-height: 10px;
  font-size: 12px;
  color: #b4d0ff;
`;
const TaskList = styled.div`
  flex: 1;
  display: flex;
  gap: 2px;
`;
const TaskButton = styled.button`
  width: 158px;
  height: 24px;
  display: flex;
  align-items: center;
  gap: 4px;
  padding: 0 9px;
  text-align: left;
  border-radius: 3px;
  color: #fff;
  background: ${props => props.$on ? '#1e52b7' : '#3c81f3'};
  box-shadow: ${props => props.$on ? 'inset 1px 1px 2px #0d2f78' : 'inset 1px 1px #5c9bff, inset -1px -1px #2460d0'};
  span {
    overflow: hidden;
    text-overflow: ellipsis;
    white-space: nowrap;
  }
`;
const Language = styled.span`
  padding: 1px 0;
  margin-right: 13px;
  background: #316AC5;
`;
const Tray = styled.div`
  height: 30px;
  width: 111px;
  display: flex;
  align-items: center;
  gap: 2px;
  padding-left: 10px;
  border-left: 1px solid #0a3c9c;
  box-shadow: inset 1px 0 #38c4f8;
  background: linear-gradient(#0c78d0 0, #19b9f3 2px, #1290e8 6px, #129aee 24px, #0d6fc4 30px);
  time { margin-left: 4px; }
`;

const menu = ['Файл', 'Редактировать', 'Вид', 'Вставить', 'Изменить', 'Текст', 'Управление', 'Окно', 'Справка'];
const toolGroups = [
  { gap: 2, items: ['newDoc', 'open', 'save', 'print', 'preview'] },
  { gap: 1, items: ['cut', 'copy', 'paste'] },
  { gap: 1, items: ['undo', 'redo'] },
  { gap: 2, items: ['magnet', 'smooth', 'straight', 'rotate', 'scale', 'align'] },
];
const playback = ['stop', 'first', 'back', 'play', 'fwd', 'last'];
const tools = ['arrow', 'subselect', 'line', 'lasso', 'pen', 'letter', 'oval', 'rect', 'pencil', 'brush', 'transform', 'fillTransform', 'ink', 'bucket', 'dropper', 'eraser'];
const components = [
  ['checkBox', 'CheckBox'], ['comboBox', 'ComboBox'],
  ['listBox', 'ListBox'], ['pushButton', 'PushButton'],
  ['radio', 'RadioButton'], ['scrollBar', 'ScrollBar'],
  ['scrollPane', 'ScrollPane'],
];
const gradients = [
  'linear-gradient(90deg, #fff, #000)',
  'radial-gradient(#fff, #111)',
  'radial-gradient(#f00, #100)',
  'radial-gradient(#0f0, #010)',
  'radial-gradient(#00f, #001)',
  'linear-gradient(90deg, #2a80f8, #fff 45%, #fff 48%, #a06a10 50%, #ffc020 75%, #fff0c0)',
  'linear-gradient(90deg, #f00, #ff0 20%, #0f0 40%, #0ff 60%, #00f 80%, #f0f)',
];
const basics = ['#000', '#333', '#666', '#999', '#ccc', '#fff', '#f00', '#0f0', '#00f', '#ff0', '#0ff', '#f0f'];

const swatches = basics.flatMap((basic, row) => {
  const base = row < 6 ? 0 : 3;
  const cells = Array.from({ length: 18 }, (_, col) =>
    `rgb(${(base + Math.floor(col / 6)) * 51}, ${(col % 6) * 51}, ${(row % 6) * 51})`);
  return [basic, '#000', ...cells];
});

const Panel = ({ title, open, menu: hasMenu }) => (
  <PanelTitle>
    <Grip />
    <Disclosure $open={open} />
    <Grow>{title}</Grow>
    {hasMenu && <Icon name="menu" size={12} />}
  </PanelTitle>
);

const ColorPick = ({ color, label }) => (
  <SwatchButton type="button" $color={color} aria-label={label}>
    <Corner><Icon name="tri" size={9} /></Corner>
  </SwatchButton>
);

const App = () => {
  return (
    <Page>
      <GlobalStyle />
      <TitleBar>
        <Icon name="flash" />
        <Grow>Macromedia Flash MX - [Без названия-1]</Grow>
        <WinButtons>
          <WinButton type="button" aria-label="Свернуть"><Icon name="minimize" /></WinButton>
          <WinButton type="button" aria-label="Восстановить"><Icon name="restore" /></WinButton>
          <WinButton type="button" aria-label="Закрыть" $close><Icon name="close" /></WinButton>
        </WinButtons>
      </TitleBar>
      <MenuBar>
        <Icon name="flashDoc" />
        <MenuItems>
          {menu.map(name => <MenuItem type="button" key={name}>{name}</MenuItem>)}
        </MenuItems>
        <WinButtons>
          <DocButton type="button" aria-label="Свернуть документ"><Icon name="minimize" size={12} /></DocButton>
          <DocButton type="button" aria-label="Восстановить документ"><Icon name="restore" size={12} /></DocButton>
          <DocButton type="button" aria-label="Закрыть документ"><Icon name="close" size={12} /></DocButton>
        </WinButtons>
      </MenuBar>

      <Workspace>
        <ToolsPanel>
          <ToolsTitle><Grip />Инстру</ToolsTitle>
          <ToolGrid $pad="4px 0 3px">
            {tools.map(name => (
              <ToolButton type="button" key={name} aria-label={name} $on={name === 'rect'}><Icon name={name} /></ToolButton>
            ))}
          </ToolGrid>
          <SectionLabel>Вид</SectionLabel>
          <ToolGrid $pad="0 0 2px">
            <ToolButton type="button" aria-label="Рука"><Icon name="hand" /></ToolButton>
            <ToolButton type="button" aria-label="Лупа"><Icon name="zoom" /></ToolButton>
          </ToolGrid>
          <SectionLabel>Цвета</SectionLabel>
          <ColorsBox>
            <ColorRow><Icon name="grayPencil" size={14} /><ColorPick color="#fff" label="Цвет линии" /></ColorRow>
            <ColorRow $on><Icon name="bucket" size={14} /><ColorPick color="#cc0099" label="Цвет заливки" /></ColorRow>
            <MiniRow>
              <BoxButton type="button" aria-label="Чёрный и белый"><Icon name="swapBw" size={13} /></BoxButton>
              <BoxButton type="button" aria-label="Нет цвета"><Icon name="noColor" size={13} /></BoxButton>
              <BoxButton type="button" aria-label="Поменять цвета"><Icon name="swap" size={13} /></BoxButton>
            </MiniRow>
          </ColorsBox>
          <SectionLabel>Опции</SectionLabel>
          <Options>
            <BoxButton type="button" $w={23} aria-label="Скругление углов"><Icon name="corner" /></BoxButton>
          </Options>
        </ToolsPanel>

        <Centre>
          <ToolBar>
            {toolGroups.map(group => (
              <ToolGroup key={group.items[0]} $gap={group.gap}>
                {group.items.map(name => (
                  <BarButton type="button" key={name} aria-label={name} $on={name === 'magnet'}><Icon name={name} /></BarButton>
                ))}
              </ToolGroup>
            ))}
          </ToolBar>
          <Controller>
            {playback.map(name => (
              <BarButton type="button" key={name} aria-label={name}><Icon name={name} /></BarButton>
            ))}
          </Controller>

          <Panel title="Монтажный стол" open />
          <Timeline>
            <Layers>
              <LayerHead>
                <Icon name="eye" /><Icon name="lock" /><Icon name="outline" />
              </LayerHead>
              <LayerRow>
                <Icon name="page" size={14} />
                <Grow>Слой 1</Grow>
                <Icon name="layerPencil" size={15} />
                <LayerMark>•</LayerMark>
                <LayerMark>•</LayerMark>
                <LayerColor />
              </LayerRow>
              <Blank />
              <LayerFoot>
                <Icon name="addLayer" /><Icon name="addGuide" /><Icon name="addFolder" />
                <Grow />
                <Icon name="trash" size={14} />
              </LayerFoot>
            </Layers>
            <Frames>
              <FrameBody>
                <FrameArea>
                  <FrameRuler>
                    {ticks(5, 12, 5).map(t => <FrameNumber key={t.i}>{t.at}</FrameNumber>)}
                  </FrameRuler>
                  <FrameTrack><KeyFrame><Dot /></KeyFrame></FrameTrack>
                  <Blank />
                </FrameArea>
                <SideColumn>
                  <ViewButton type="button" aria-label="Вид кадров"><Icon name="frameView" size={14} /></ViewButton>
                  <ScrollBar vertical fill parts={[0, 43, 1]} />
                </SideColumn>
              </FrameBody>
              <FrameFoot>
                <FootGroup><BoxButton type="button" $w={16} aria-label="К текущему кадру"><Icon name="playhead" size={14} /></BoxButton></FootGroup>
                <FootGroup>
                  <BoxButton type="button" $w={16} aria-label="Калька"><Icon name="onion" size={14} /></BoxButton>
                  <BoxButton type="button" $w={16} aria-label="Контуры кальки"><Icon name="onionOut" size={14} /></BoxButton>
                </FootGroup>
                <FootGroup><BoxButton type="button" $w={16} aria-label="Правка кадров"><Icon name="onionEdit" size={14} /></BoxButton></FootGroup>
                <FootGroup><BoxButton type="button" $w={16} aria-label="Маркеры"><Icon name="marker" size={14} /></BoxButton></FootGroup>
                <Field $w={25}>1</Field>
                <Field $w={38}>12.0 fps</Field>
                <Field $w={34}>0.0s</Field>
                <ScrollBar fill parts={[0, 30, 240]} />
              </FrameFoot>
              <Playhead>1</Playhead>
              <PlayLine />
            </Frames>
          </Timeline>

          <EditBar>
            <Icon name="leftArrow" />
            <Divider />
            <SceneName><Icon name="clapper" />Сцена 1</SceneName>
            <Grow />
            <EditTools>
              <Divider />
              <DropButton type="button" aria-label="Сцены"><Icon name="clapper" /><Notch /></DropButton>
              <DropButton type="button" aria-label="Символы"><Icon name="shapes" /><Notch /></DropButton>
              <Combo $w={82} $h={19}>
                <select aria-label="Масштаб"><option>Показать ка</option></select>
                <ComboArrow><Icon name="chevDown" size={14} /></ComboArrow>
              </Combo>
            </EditTools>
          </EditBar>

          <Editor>
            <RulerBox />
            <RulerBox><HorizontalRuler /></RulerBox>
            <RulerBox><VerticalRuler /></RulerBox>
            <StageFrame>
              <Pasteboard><Canvas /></Pasteboard>
              <ScrollBar vertical parts={[132, 50, 43]} />
              <ScrollBar parts={[228, 332, 73]} />
            </StageFrame>
          </Editor>

          <Panel title="Действия - Кадр" />
          <Panel title="Параметры" open menu />
          <Properties>
            <PropCell $line $bottom $gap={9} $pad="0 0 0 15px">
              <Icon name="rect" size={17} />
              <span>Прямоугольник<br />Инструмент</span>
            </PropCell>
            <PropCell $bottom $align="flex-start" $pad="3px 1px 0 7px">
              <PropStack>
                <PropRow>
                  <Icon name="grayPencil" size={15} />
                  <ColorPick color="#fff" label="Цвет линии" />
                  <Spin>
                    <input aria-label="Толщина линии" defaultValue="1" />
                    <button type="button" aria-label="Выбрать толщину"><Icon name="tri" size={8} /></button>
                  </Spin>
                  <Combo $w={125} $h={23}>
                    <select aria-label="Стиль линии"><option>Сплошной</option></select>
                    <StrokeLine />
                    <ComboArrow><Icon name="chevDown" size={14} /></ComboArrow>
                  </Combo>
                  <PushButton type="button">Другое...</PushButton>
                </PropRow>
                <PropRow>
                  <Icon name="bucket" size={15} />
                  <ColorPick color="#cc0099" label="Цвет заливки" />
                </PropRow>
              </PropStack>
              <Grow />
              <Icon name="help" />
            </PropCell>
            <PropCell $line />
            <PropCell $align="flex-end">
              <Grow />
              <Collapse type="button" aria-label="Свернуть панель"><Icon name="up" size={14} /></Collapse>
            </PropCell>
          </Properties>
        </Centre>

        <Dock>
          <Panel title="Микшер цвета" />
          <Panel title="Наборы цветов" open menu />
          <SwatchPanel>
            <SwatchGrid>
              {swatches.map((color, i) => (
                <Swatch type="button" key={i} $color={color} $on={i === 188} aria-label={color} />
              ))}
            </SwatchGrid>
            <ScrollBar vertical parts={[0, 18, 225]} />
          </SwatchPanel>
          <GradientPanel>
            {gradients.map(fill => <GradientSwatch type="button" key={fill} $fill={fill} aria-label="Градиент" />)}
            <StepButtons>
              <ScrollButton type="button" $h={10} aria-label="Вверх"><Icon name="chevUp" size={8} /></ScrollButton>
              <ScrollButton type="button" $h={10} aria-label="Вниз"><Icon name="chevDown" size={8} /></ScrollButton>
            </StepButtons>
          </GradientPanel>
          <Panel title="Компоненты" open menu />
          <LibrarySelect>
            <select aria-label="Библиотека"><option>Flash UI Components</option></select>
            <Icon name="tri" />
          </LibrarySelect>
          <ComponentList>
            {components.map(([icon, name]) => (
              <ComponentItem key={name}><Icon name={icon} size={17} />{name}</ComponentItem>
            ))}
          </ComponentList>
          <Panel title="Ответы" />
        </Dock>
      </Workspace>

      <StatusBar><StatusCell>NUM</StatusCell></StatusBar>
      <TaskBar>
        <StartButton type="button"><Icon name="winFlag" size={18} />пуск</StartButton>
        <QuickLaunch>
          <QuickButton type="button" aria-label="Internet Explorer"><Icon name="ie" /></QuickButton>
          <QuickButton type="button" aria-label="Word"><Icon name="word" /></QuickButton>
          <QuickButton type="button" aria-label="Media Player"><Icon name="media" /></QuickButton>
          <More type="button">»</More>
        </QuickLaunch>
        <TaskList>
          <TaskButton type="button"><Icon name="wordDoc" /><span>Флеш1 - Microsoft W...</span></TaskButton>
          <TaskButton type="button"><Icon name="winamp" /><span>675. БЕСКОНЕЧНЫЕ ...</span></TaskButton>
          <TaskButton type="button" $on><Icon name="flash" /><span>Macromedia Flash MX...</span></TaskButton>
        </TaskList>
        <Language>RL</Language>
        <Tray>
          <Icon name="phone" /><Icon name="speaker" /><Icon name="radioWave" />
          <time>20:02</time>
        </Tray>
      </TaskBar>
      <svg width="0" height="0" aria-hidden="true">
        <linearGradient id="fadeBlue" x2="0" y2="1"><stop stopColor="#00008c" /><stop offset="1" stopColor="#dde" /></linearGradient>
      </svg>
    </Page>
  );
}

export default App;
